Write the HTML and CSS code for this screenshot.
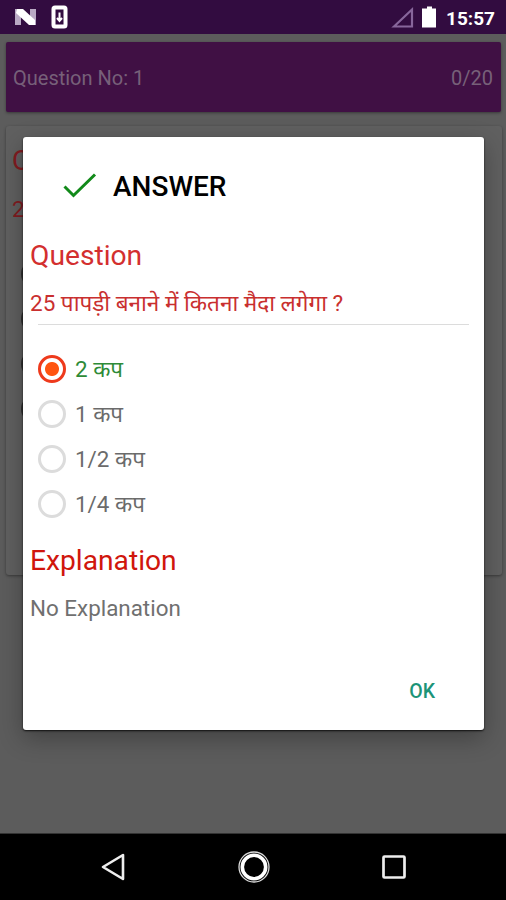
FILE: index.html
```html
<!DOCTYPE html>
<html lang="hi">
<head>
    <meta charset="UTF-8">
    <meta name="viewport" content="width=device-width, initial-scale=1.0">
    <title>Quiz Answer</title>
    <link rel="stylesheet" href="styles.css">
</head>
<body>
    <div class="phone">
        <header class="status-bar">
            <svg class="status-left" width="60" height="26" viewBox="0 0 60 26">
                <path d="M0 6h6v16H0zM15 6h6v16h-6z" fill="#b9a9c4"/>
                <path d="M2 6h6l12 11v5h-6L1 10z" fill="#fff"/>
                <rect x="38.500" y="4.500" width="12" height="19" rx="1.500" fill="none" stroke="#fff" stroke-width="4"/>
                <path d="M44.500 9.500v7M42 15l2.500 3 2.500-3" fill="none" stroke="#fff" stroke-width="2"/>
            </svg>
            <div class="status-right">
                <svg width="50" height="26" viewBox="0 0 50 26">
                    <path d="M4 23.500L22 6.500v17z" fill="none" stroke="#87669b" stroke-width="2.200"/>
                    <path d="M37 3.500h5v2h4v19H32v-19h5z" fill="#fff"/>
                </svg>
                <span class="clock">15:57</span>
            </div>
        </header>

        <!-- Quiz screen behind the dialog -->
        <main class="quiz">
            <div class="quiz-header">
                <span>Question No: 1</span>
                <span class="score">0/20</span>
            </div>
            <div class="quiz-card">
                <div class="quiz-title">Q</div>
                <div class="quiz-text">2</div>
                <div class="quiz-radios">
                    <span></span>
                    <span></span>
                    <span></span>
                    <span></span>
                </div>
            </div>
        </main>

        <nav class="nav-bar">
            <svg width="34" height="34" viewBox="0 0 34 34">
                <path d="M7 17L27 5v24z" fill="none" stroke="#eee" stroke-width="2.600" stroke-linejoin="round"/>
            </svg>
            <svg width="34" height="34" viewBox="0 0 34 34">
                <circle cx="17" cy="17" r="15" fill="none" stroke="#ddd" stroke-width="1.300"/>
                <circle cx="17" cy="17" r="11.700" fill="none" stroke="#fff" stroke-width="3.600"/>
            </svg>
            <svg width="34" height="34" viewBox="0 0 34 34">
                <rect x="6.500" y="6.500" width="21" height="21" rx="1" fill="none" stroke="#eee" stroke-width="2.700"/>
            </svg>
        </nav>

        <!-- Answer dialog -->
        <div class="dialog">
            <div class="dialog-head">
                <svg width="34" height="28" viewBox="0 0 34 28">
                    <path d="M1.500 13.500L10.500 22.500L32 1.500" fill="none" stroke="#128a1a" stroke-width="3"/>
                </svg>
                <span>ANSWER</span>
            </div>
            <h2 class="question-title">Question</h2>
            <p class="question-text">25 पापड़ी बनाने में कितना मैदा लगेगा ?</p>
            <div class="divider"></div>
            <ul class="options">
                <li class="correct"><span class="radio"></span>2 कप</li>
                <li><span class="radio"></span>1 कप</li>
                <li><span class="radio"></span>1/2 कप</li>
                <li><span class="radio"></span>1/4 कप</li>
            </ul>
            <h2 class="explanation-title">Explanation</h2>
            <p class="explanation-text">No Explanation</p>
            <button class="ok" type="button">OK</button>
        </div>
    </div>
</body>
</html>
```
FILE: styles.css
```css
* {
    box-sizing: border-box;
}
body {
    margin: 0;
    font-family: Roboto, "Noto Sans", sans-serif;
}
h2, p, ul {
    margin: 0;
    padding: 0;
    font-weight: 400;
}
svg {
    display: block;
}
.phone {
    position: relative;
    display: flex;
    flex-direction: column;
    width: 506px;
    height: 900px;
    overflow: hidden;
    background-color: #5c5c5c;
}
.status-bar {
    display: flex;
    justify-content: space-between;
    height: 34px;
    padding: 3px 11px 0 15px;
    background-color: #320c40;
}
.status-right {
    display: flex;
    gap: 6px;
}
.clock {
    color: #fff;
    font-size: 19px;
    font-weight: 700;
    line-height: 31px;
}
.quiz {
    flex: 1;
    padding: 8px 4px 0 6px;
}
.quiz-header {
    display: flex;
    justify-content: space-between;
    height: 70px;
    margin-right: 1px;
    padding: 0 8px 0 7px;
    border-radius: 2px;
    background-color: #401044;
    box-shadow: 0 1px 3px rgba(0, 0, 0, 0.4);
    color: #776079;
    font-size: 20px;
    line-height: 72px;
}
.quiz-card {
    height: 449px;
    margin-top: 14px;
    padding: 17px 6px 0;
    border-radius: 3px;
    background-color: #606060;
    box-shadow: 0 1px 3px rgba(0, 0, 0, 0.4);
    color: #821b21;
}
.quiz-title {
    font-size: 28px;
    line-height: 36px;
}
.quiz-text {
    margin-top: 15px;
    font-size: 22.500px;
    line-height: 30px;
}
.quiz-radios {
    display: grid;
    gap: 17px;
    margin-top: 36px;
    padding-left: 8.500px;
}
.quiz-radios span {
    width: 28px;
    height: 28px;
    border: 3px solid #303030;
    border-radius: 50%;
}
.nav-bar {
    display: flex;
    justify-content: space-between;
    height: 67px;
    padding: 16px 95px 0 96px;
    border-top: 1px solid #333;
    background-color: #000;
}
.dialog {
    position: absolute;
    top: 137px;
    left: 23px;
    display: flex;
    flex-direction: column;
    width: 461px;
    height: 593px;
    padding: 0 15px 0 7px;
    border-radius: 3px;
    background-color: #fff;
    box-shadow: 0 1px 2px rgba(0, 0, 0, 0.8), 0 8px 24px rgba(0, 0, 0, 0.3);
}
.dialog-head {
    display: flex;
    align-items: center;
    gap: 16px;
    height: 98px;
    padding: 1px 0 0 33px;
    color: #000;
    font-size: 28px;
    font-weight: 500;
}
.question-title {
    color: #d32f2f;
    font-size: 28.200px;
    line-height: 42px;
}
.question-text {
    margin-top: 10px;
    color: #c92f2f;
    font-size: 22.500px;
    line-height: 33px;
}
.divider {
    height: 1px;
    margin: 4px 0 0 8px;
    background-color: #dcdcdc;
}
.options {
    margin-top: 21px;
    list-style: none;
}
.options li {
    display: flex;
    align-items: center;
    gap: 9px;
    height: 45px;
    padding-left: 8px;
    color: #6b6b6b;
    font-size: 22.400px;
}
.options .correct {
    color: #2e8b37;
}
.radio {
    width: 28px;
    height: 28px;
    border: 3px solid #dcdcdc;
    border-radius: 50%;
}
.correct .radio {
    border-color: #ee3a1c;
    background: radial-gradient(circle, #ff5410 6.500px, #fff 7.500px);
}
.explanation-title {
    margin-top: 14px;
    color: #d0160c;
    font-size: 28.200px;
    line-height: 42px;
}
.explanation-text {
    margin-top: 11px;
    color: #707070;
    font-size: 22.400px;
    line-height: 30px;
}
.ok {
    align-self: flex-end;
    margin: 53px 34px 0 0;
    padding: 0;
    border: none;
    background: none;
    color: #1c9478;
    font-family: inherit;
    font-size: 19.500px;
    font-weight: 500;
    line-height: 32px;
}
```
